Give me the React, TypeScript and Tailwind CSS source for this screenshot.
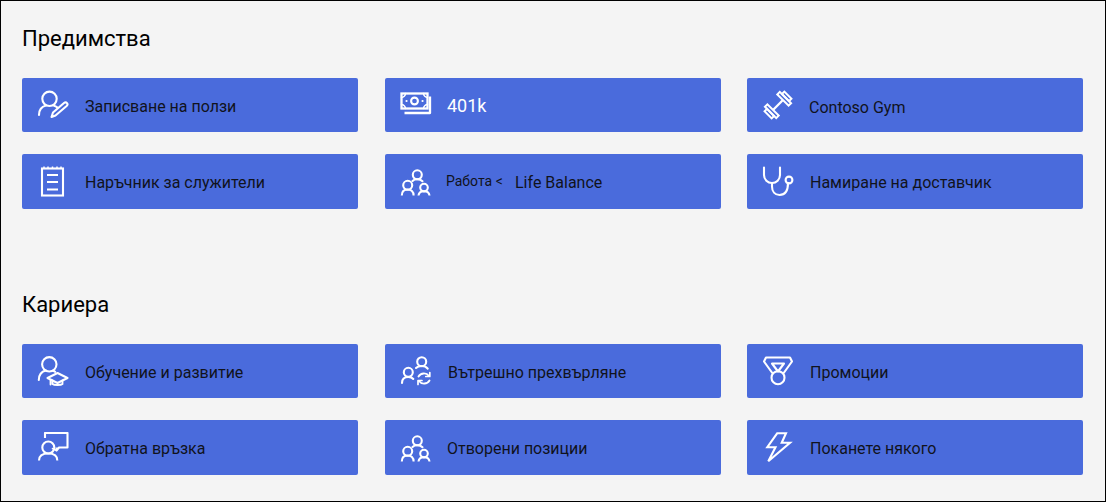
import { ReactNode } from "react"

const font = "font-['Roboto','Liberation_Sans',sans-serif]"

function Icon({ children }: { children: ReactNode }) {
  return (
    <svg viewBox="0 0 32 32" fill="none" stroke="white" strokeWidth="2.1" strokeLinecap="round" strokeLinejoin="round" className="w-8 h-8 shrink-0">
      {children}
    </svg>
  )
}

const trioIcon = (
  <Icon>
    <circle cx="17.300" cy="8.800" r="4.500" />
    <circle cx="7.700" cy="19.300" r="4.500" />
    <circle cx="24" cy="21.600" r="3.800" />
    <path d="M1.800 29.500c0-4 2.500-6 5.900-6s5.900 2 5.900 6" strokeLinecap="butt" />
    <path d="M18.500 29.500c.3-2.800 2.500-4.300 5.500-4.300s5.200 1.500 5.500 4.300" strokeLinecap="butt" />
    <path d="M12.500 15c1.200-1.300 2.700-1.800 4.800-1.800s4 .7 5.200 2" />
  </Icon>
)

const enrollIcon = (
  <Icon>
    <circle cx="12.500" cy="9.800" r="7.200" />
    <path d="M2 26c0-5 3-8.500 7-9.500" />
    <path d="M17 16.800c1.200.3 2.300.9 3.200 1.600" />
    <path d="M16 23.500l11-9.500c1-.8 2.300-.7 3 .1s.6 2-.4 2.900L18.500 26.500l-4 1.500z" />
  </Icon>
)

const moneyIcon = (
  <Icon>
    <rect x="1.500" y="4.500" width="26" height="15" strokeLinejoin="miter" strokeWidth="2.300" />
    <circle cx="14.500" cy="12" r="3.400" />
    <path d="M1.500 8.500c2 0 4-2 4-4M27.500 8.500c-2 0-4-2-4-4M1.500 15.500c2 0 4 2 4 4M27.500 15.500c-2 0-4 2-4 4" strokeWidth="1.500" />
    <path d="M6.500 12h.1M22.500 12h.1" />
    <path d="M30 7.500V24H4.500" strokeWidth="2.300" strokeLinecap="butt" />
  </Icon>
)

const gymIcon = (
  <Icon>
    <g transform="rotate(-45 16 16)" strokeWidth="2" strokeLinecap="butt" strokeLinejoin="miter">
      <path d="M9 16h14" strokeWidth="2.300" />
      <rect x="5.500" y="8" width="3.500" height="16" />
      <rect x="23" y="8" width="3.500" height="16" />
      <rect x="2" y="11" width="3.500" height="10" />
      <rect x="26.500" y="11" width="3.500" height="10" />
    </g>
  </Icon>
)

const clipboardIcon = (
  <Icon>
    <rect x="5" y="2.500" width="21" height="27" strokeLinejoin="miter" />
    <path d="M10 9h11M10 16h11M10 23.500h11" strokeLinecap="butt" />
    <path d="M7 .5v2M11 .5v2M15.500 .5v2M20 .5v2M24 .5v2" strokeWidth="1.500" strokeLinecap="butt" />
  </Icon>
)

const stethoscopeIcon = (
  <Icon>
    <path d="M2 1.500v7.500a8 8 0 0 0 16 0V1.500" />
    <circle cx="27" cy="14" r="3.400" />
    <path d="M10 17v3.500c0 5 3 8.500 7.500 8.500 5.500 0 8.500-4 8.500-12" />
  </Icon>
)

const gradIcon = (
  <Icon>
    <circle cx="12.300" cy="9.300" r="7.200" />
    <path d="M1.800 25c0-5 3-8.500 7.200-9.500" />
    <path d="M16 15.800c.8.300 1.500.6 2.200 1" />
    <path d="M10.500 23l10-5 10 5-10 5z" />
    <path d="M13.500 25v4.500M15.500 25.500v3.500c1.500 1.300 8.500 1.300 10 0v-3.500" strokeWidth="1.800" />
  </Icon>
)

const transferIcon = (
  <Icon>
    <circle cx="21.700" cy="6.700" r="4.500" />
    <circle cx="8.300" cy="17.300" r="4.500" />
    <path d="M2 28c0-4 2.700-6 6.300-6 2.200 0 4 .7 5 2" />
    <path d="M16 13c1.300-1.300 3.300-2 5.700-2 2.700 0 4.800 1 6 2.700" />
    <path d="M18.500 21.500a6.300 6.300 0 0 1 10.500-.5M29.500 25.500a6.300 6.300 0 0 1-10.500.5" strokeWidth="1.900" />
    <path d="M29.800 17.500v4h-4M18 29.500v-4h4" strokeWidth="1.700" />
  </Icon>
)

const feedbackIcon = (
  <Icon>
    <path d="M8 6V1h22.500v14.500H22l-2.500 3v-3" strokeLinecap="butt" />
    <path d="M15.500 16.500l4 2" strokeWidth="1.600" />
    <circle cx="11.300" cy="15.500" r="6" />
    <path d="M2 28.500c0-4.500 3.500-7 9.300-7s9 2.500 9 7" strokeLinecap="butt" />
  </Icon>
)

const medalIcon = (
  <Icon>
    <circle cx="16" cy="22.700" r="6.500" />
    <path d="M10.300 18L2 6.500 4 2.500h24l2 4L21.700 18" />
    <path d="M10 8.500h12L16 16.500z" />
  </Icon>
)

const boltIcon = (
  <Icon>
    <path d="M15.300 1.200L5.300 15.200h8.200L6.300 29.200 28 10.800h-8.300L24 1.200z" strokeLinejoin="miter" />
  </Icon>
)

interface Tile {
  icon: ReactNode
  label: ReactNode
  textClass: string
}

const benefits: Tile[] = [
  { icon: enrollIcon, label: "Записване на ползи", textClass: "ml-[16px] mt-[4px] text-[#11131c]" },
  { icon: moneyIcon, label: "401k", textClass: "ml-[15px] mt-[1px] text-white text-[18px]" },
  { icon: gymIcon, label: "Contoso Gym", textClass: "ml-[15px] mt-[6px] text-[#11131c]" },
  { icon: clipboardIcon, label: "Наръчник за служители", textClass: "ml-[16px] mt-[2px] text-[#11131c]" },
  {
    icon: trioIcon,
    label: (
      <span className="flex items-center">
        <span className="text-[14px] -mt-[3px] w-[69px]">Работа &lt;</span>
        <span>Life Balance</span>
      </span>
    ),
    textClass: "ml-[14px] mt-[2px] text-[#11131c]",
  },
  { icon: stethoscopeIcon, label: "Намиране на доставчик", textClass: "ml-[16px] mt-[2px] text-[#11131c]" },
]

const career: Tile[] = [
  { icon: gradIcon, label: "Обучение и развитие", textClass: "ml-[16px] mt-[4px] text-[#11131c]" },
  { icon: transferIcon, label: "Вътрешно прехвърляне", textClass: "ml-[16px] mt-[4px] text-[#11131c]" },
  { icon: medalIcon, label: "Промоции", textClass: "ml-[16px] mt-[4px] text-[#11131c]" },
  { icon: feedbackIcon, label: "Обратна връзка", textClass: "ml-[16px] mt-[2px] text-[#11131c]" },
  { icon: trioIcon, label: "Отворени позиции", textClass: "ml-[15px] mt-[2px] text-[#11131c]" },
  { icon: boltIcon, label: "Поканете някого", textClass: "ml-[16px] mt-[2px] text-[#11131c]" },
]

function Section({ title, items, className }: { title: string; items: Tile[]; className: string }) {
  return (
    <section className={className}>
      <h2 className="text-[22px] leading-7 text-black mb-[25px]">{title}</h2>
      <div className="grid grid-cols-[363px_362px_336px] grid-rows-[54px_55px] gap-y-[22px]">
        {items.map((item, i) => (
          <div key={i} className="w-[336px] flex items-center pl-[15px] rounded-[2px] bg-[#4a6bdc]">
            {item.icon}
            <div className={`text-[16px] ${item.textClass}`}>{item.label}</div>
          </div>
        ))}
      </div>
    </section>
  )
}

export default function App() {
  return (
    <div className={`w-[1106px] h-[502px] border border-black bg-[#f4f4f4] pl-[21px] overflow-hidden ${font}`}>
      <Section title="Предимства" items={benefits} className="pt-[24px]" />
      <Section title="Кариера" items={career} className="mt-[82px]" />
    </div>
  )
}
